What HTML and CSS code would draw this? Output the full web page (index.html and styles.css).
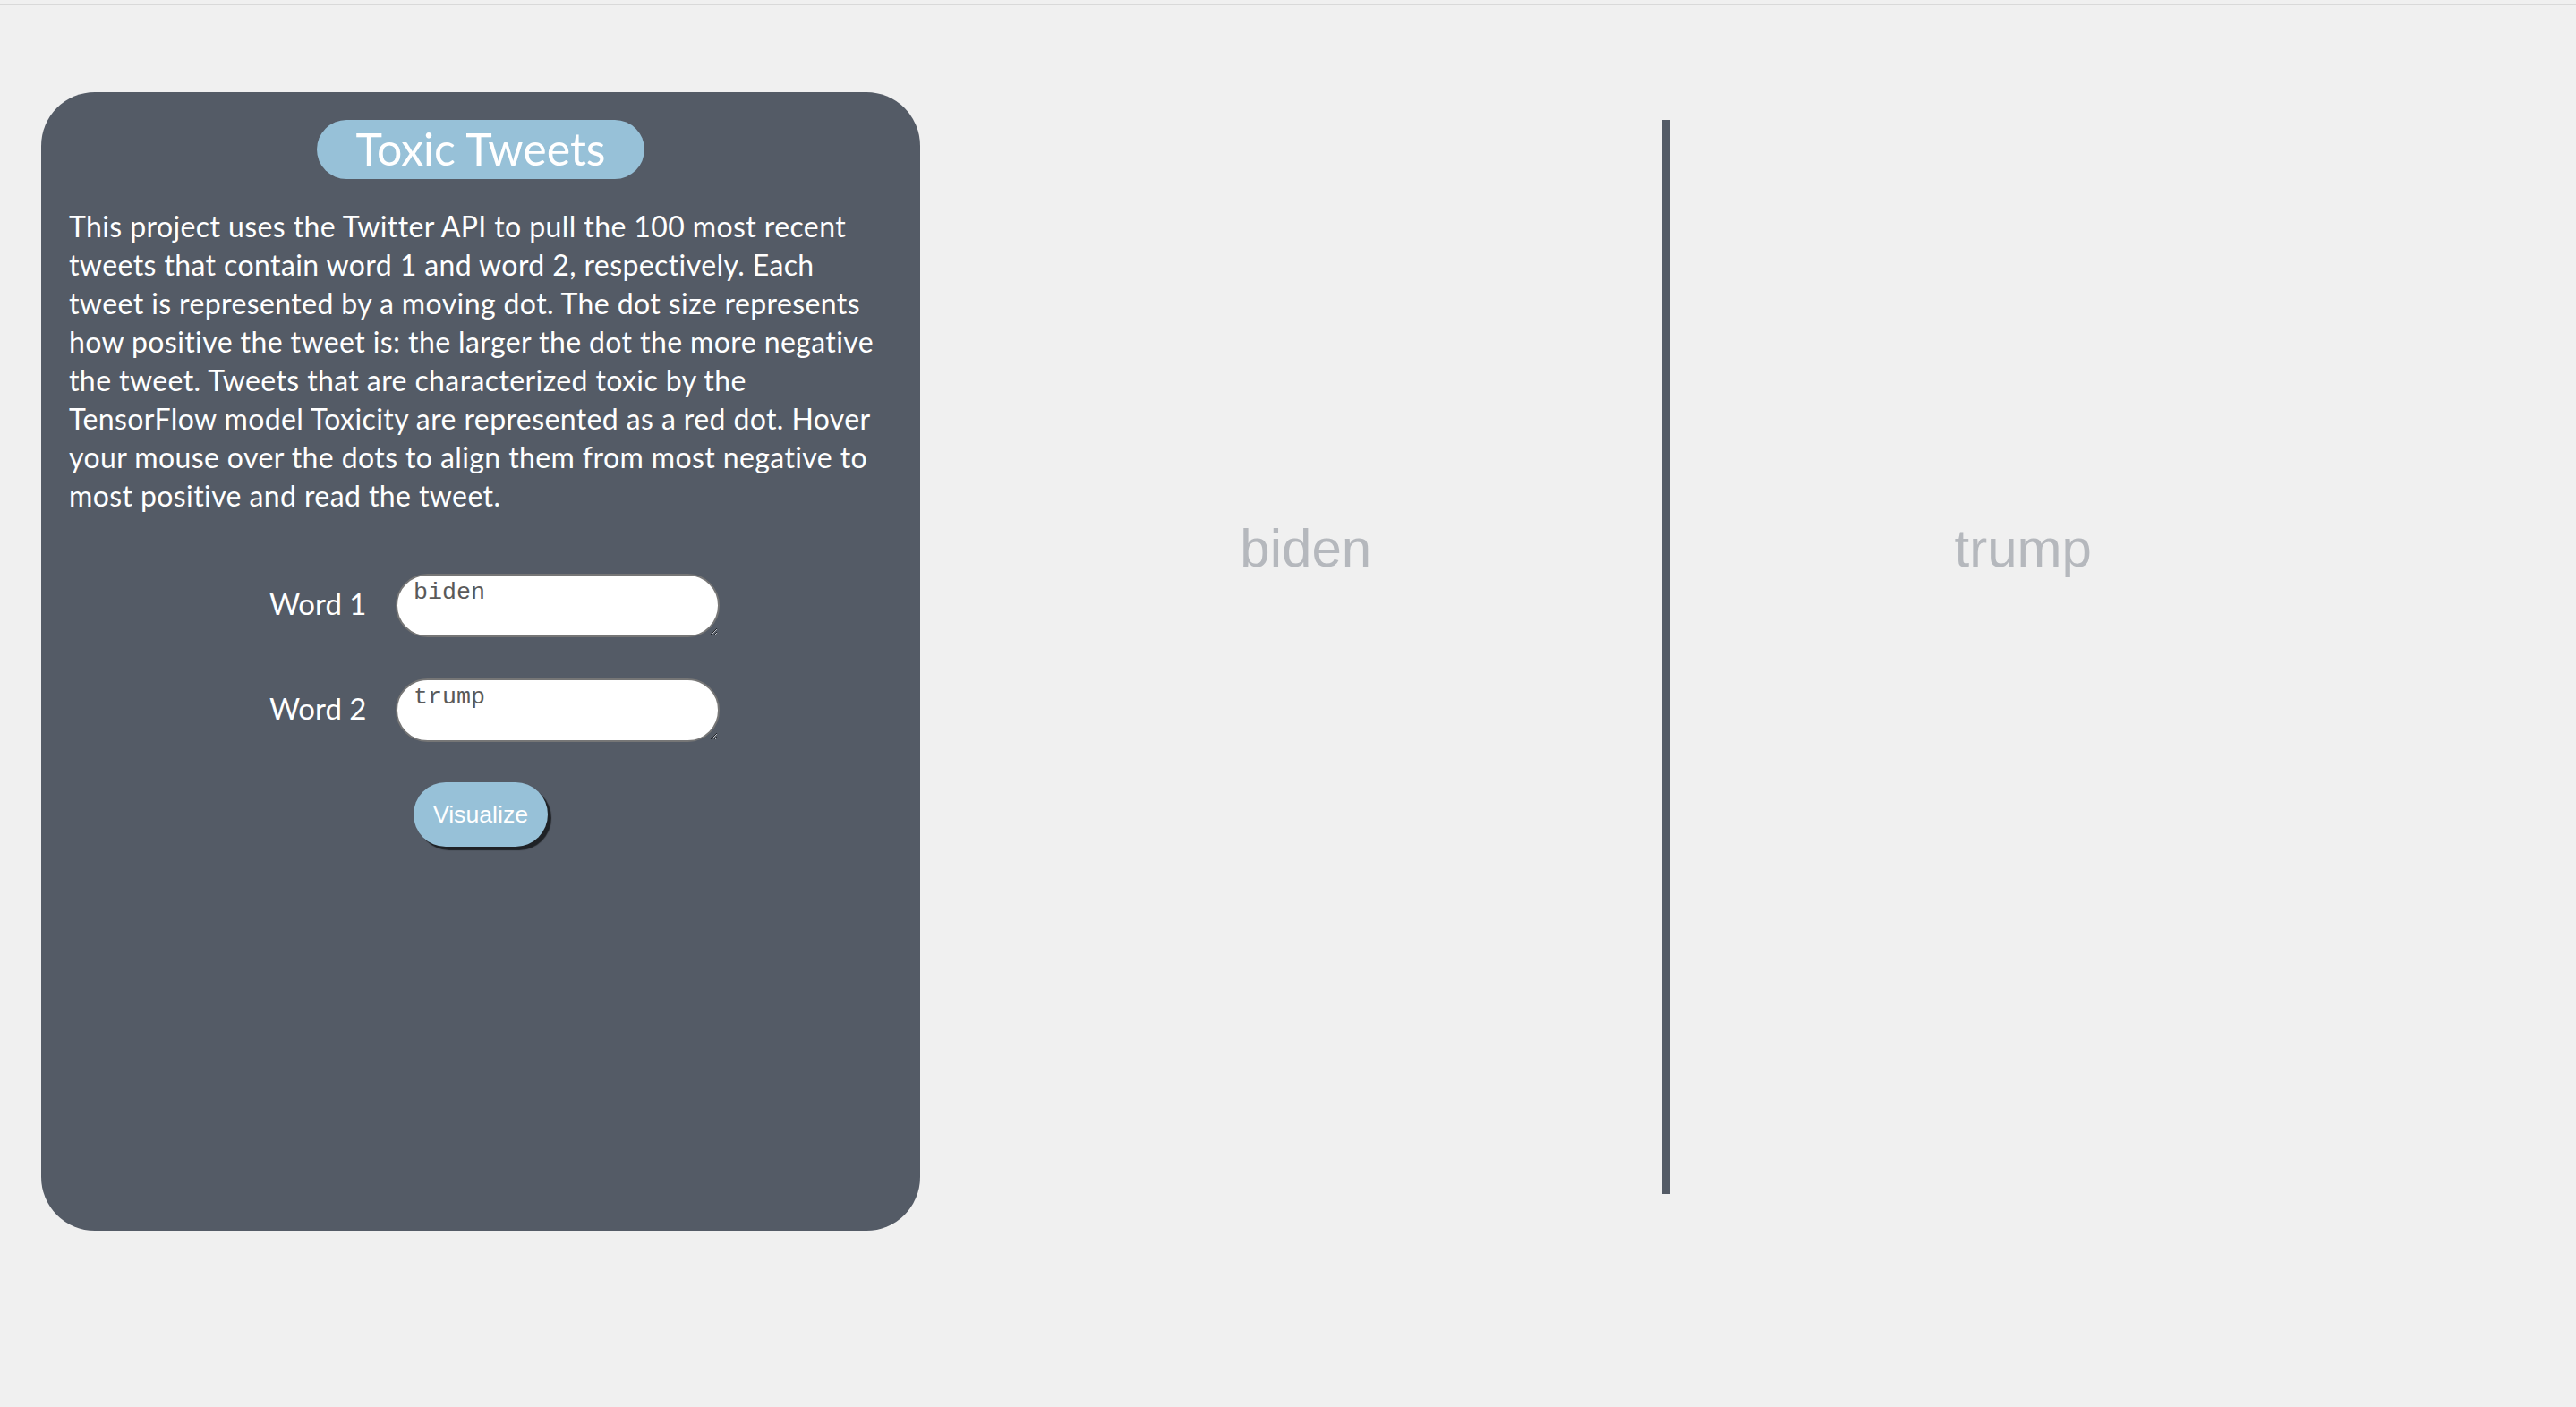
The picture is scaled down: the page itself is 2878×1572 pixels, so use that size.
FILE: index.html
```html
<!DOCTYPE html>
<html lang="en">
<head>
<meta charset="utf-8">
<title>Toxic Tweets</title>
<link rel="stylesheet" href="styles.css">
</head>
<body>
<div class="topline"></div>
<main class="layout">
  <section class="panel">
    <h1 class="title">Toxic Tweets</h1>
    <p class="intro">This project uses the Twitter API to pull the 100 most recent<br>tweets that contain word 1 and word 2, respectively. Each<br>tweet is represented by a moving dot. The dot size represents<br>how positive the tweet is: the larger the dot the more negative<br>the tweet. Tweets that are characterized toxic by the<br>TensorFlow model Toxicity are represented as a red dot. Hover<br>your mouse over the dots to align them from most negative to<br>most positive and read the tweet.</p>
    <div class="form">
      <label class="label" for="w1">Word 1</label>
      <textarea class="field" id="w1">biden</textarea>
      <label class="label" for="w2">Word 2</label>
      <textarea class="field" id="w2">trump</textarea>
    </div>
    <button class="btn">Visualize</button>
  </section>
  <section class="chart">
    <div class="col"><span class="word">biden</span></div>
    <div class="divider"></div>
    <div class="col"><span class="word word-right">trump</span></div>
  </section>
</main>
</body>
</html>
```
FILE: styles.css
```css
html, body {
  margin: 0;
  padding: 0;
  background: #f0f0f0;
}
body {
  font-family: "Lato", "Noto Sans", sans-serif;
  min-height: 1572px;
}
.topline {
  height: 2px;
  margin-top: 4px;
  background: #d9d9d9;
}
.layout {
  display: flex;
  align-items: flex-start;
  padding-left: 46px;
  margin-top: 97px;
}
.panel {
  box-sizing: border-box;
  flex: none;
  width: 982px;
  height: 1272px;
  background: #545b66;
  border-radius: 60px;
  padding: 31px 31px 0;
  display: flex;
  flex-direction: column;
  align-items: center;
}
.title {
  margin: 0;
  width: 366px;
  height: 66px;
  border-radius: 33px;
  background: #97c1d8;
  color: #fff;
  font-weight: 400;
  font-size: 50px;
  line-height: 64px;
  text-align: center;
}
.intro {
  align-self: stretch;
  margin: 31px 0 0;
  color: #fff;
  font-size: 32px;
  letter-spacing: 0.4px;
  line-height: 43px;
  white-space: nowrap;
}
.form {
  align-self: flex-start;
  margin: 66px 0 0 224px;
  display: grid;
  grid-template-columns: 108px 362px;
  column-gap: 33px;
  row-gap: 46px;
  align-items: center;
}
.label {
  color: #fff;
  font-size: 33px;
  white-space: nowrap;
  margin-top: -5px;
}
.field {
  box-sizing: border-box;
  width: 362px;
  height: 71px;
  margin: 0;
  border: 2px solid #767676;
  border-radius: 36px;
  padding: 4px 18px;
  background: #fff;
  color: #5a5a5a;
  font-family: "Liberation Mono", monospace;
  font-size: 26.67px;
  outline: none;
}
.btn {
  margin-top: 45px;
  width: 150px;
  height: 72px;
  border: none;
  border-radius: 36px;
  background: #97c1d8;
  color: #fff;
  font-family: "Liberation Sans", Arial, sans-serif;
  font-size: 26.67px;
  box-shadow: 4px 4px 1px #1f2226;
  padding: 0;
}
.chart {
  flex: none;
  margin-left: 33px;
  margin-top: 31px;
  width: 1600px;
  height: 1200px;
  display: flex;
}
.col {
  flex: 1;
  text-align: center;
  padding-top: 449px;
}
.divider {
  width: 9px;
  background: #545b66;
}
.word {
  font-family: "Liberation Sans", Arial, sans-serif;
  font-size: 60px;
  line-height: 60px;
  color: #b5b8bd;
}
.word-right {
  margin-right: 6px;
}
```
